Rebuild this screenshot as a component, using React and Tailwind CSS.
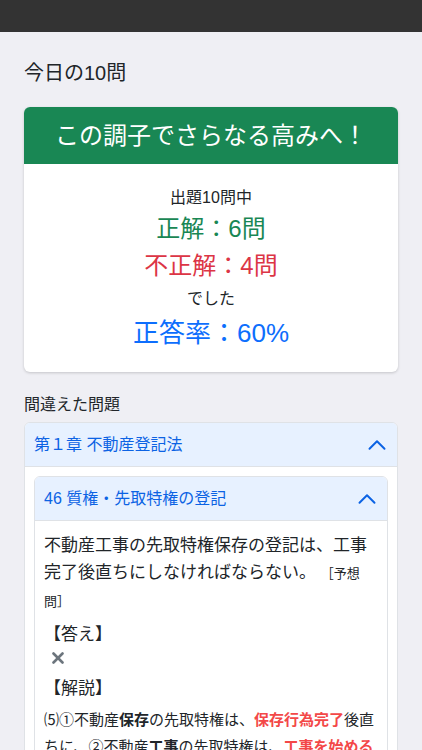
import React from 'react';

function ChevronUp() {
  return (
    <svg width="20" height="20" viewBox="0 0 16 16" fill="none" stroke="#0c63e4" strokeWidth="1.6" strokeLinecap="round" strokeLinejoin="round">
      <polyline points="2,11 8,5 14,11" />
    </svg>
  );
}

function CrossMark() {
  return (
    <svg width="12" height="12" viewBox="0 0 12 12" stroke="#6c757d" strokeWidth="2.6" strokeLinecap="round">
      <line x1="1.5" y1="1.5" x2="10.5" y2="10.5" />
      <line x1="10.5" y1="1.5" x2="1.5" y2="10.5" />
    </svg>
  );
}

export default function App() {
  return (
    <div className="min-h-[750px] bg-[#efeff4] font-['Liberation_Sans','Noto_Sans_CJK_JP',sans-serif] text-[#212529]">
      {/* status bar */}
      <div className="h-8 bg-[#333333]" />

      <div className="px-6 pt-[25px]">
        <h2 className="text-[20px] leading-[32px]">今日の10問</h2>

        {/* result card */}
        <div className="mt-[18px] bg-white rounded-md overflow-hidden shadow-[0_1px_3px_rgba(0,0,0,0.18)]">
          <div className="h-[57px] bg-[#198754] text-white text-[24px] flex items-center justify-center">
            この調子でさらなる高みへ！
          </div>
          <div className="pt-[22px] pb-[20px] flex flex-col items-center">
            <p className="text-[16px] leading-[24px]">出題10問中</p>
            <p className="text-[24px] leading-[37px] text-[#198754]">正解：6問</p>
            <p className="text-[24px] leading-[37px] text-[#dc3545]">不正解：4問</p>
            <p className="text-[16px] leading-[30px]">でした</p>
            <p className="text-[26px] leading-[38px] text-[#0d6efd]">正答率：60%</p>
          </div>
        </div>

        <h3 className="mt-[21px] text-[16px] leading-[24px]">間違えた問題</h3>

        {/* chapter accordion */}
        <div className="mt-[5px] bg-white rounded-md border border-[#dfe2e6] overflow-hidden">
          <div className="h-[44px] bg-[#e7f1ff] border-b border-[#dfe2e6] pl-[9px] pr-[10px] flex items-center justify-between text-[#0c63e4] text-[16px]">
            <span>第１章 不動産登記法</span>
            <ChevronUp />
          </div>
          <div className="p-[9px]">
            {/* section accordion */}
            <div className="rounded-md border border-[#dfe2e6] overflow-hidden">
              <div className="h-[44px] bg-[#e7f1ff] border-b border-[#dfe2e6] pl-[9px] pr-[10px] flex items-center justify-between text-[#0c63e4] text-[16px]">
                <span>46 質権・先取特権の登記</span>
                <ChevronUp />
              </div>
              <div className="px-[9px] pt-[11px] pb-6">
                <p className="text-[17px] leading-[27px]">
                  不動産工事の先取特権保存の登記は、工事完了後直ちにしなければならない。{' '}
                  <span className="text-[13px]">［予想問］</span>
                </p>
                <p className="mt-[6px] text-[17px] leading-[27px]">【答え】</p>
                <div className="h-[19px] pl-[8px] flex items-center">
                  <CrossMark />
                </div>
                <p className="mt-[8px] text-[17px] leading-[27px]">【解説】</p>
                <p className="mt-[4px] text-[15px] leading-[27px]">
                  ⑸①不動産<b>保存</b>の先取特権は、<b className="text-[#f34848]">保存行為完了</b>後直ちに、②不動産<b>工事</b>の先取特権は、<b className="text-[#f34848]">工事を始める前</b>にその費用の予算額を登記しなければならない（民法337条、338条1項）。
                </p>
              </div>
            </div>
          </div>
        </div>
      </div>
    </div>
  );
}
